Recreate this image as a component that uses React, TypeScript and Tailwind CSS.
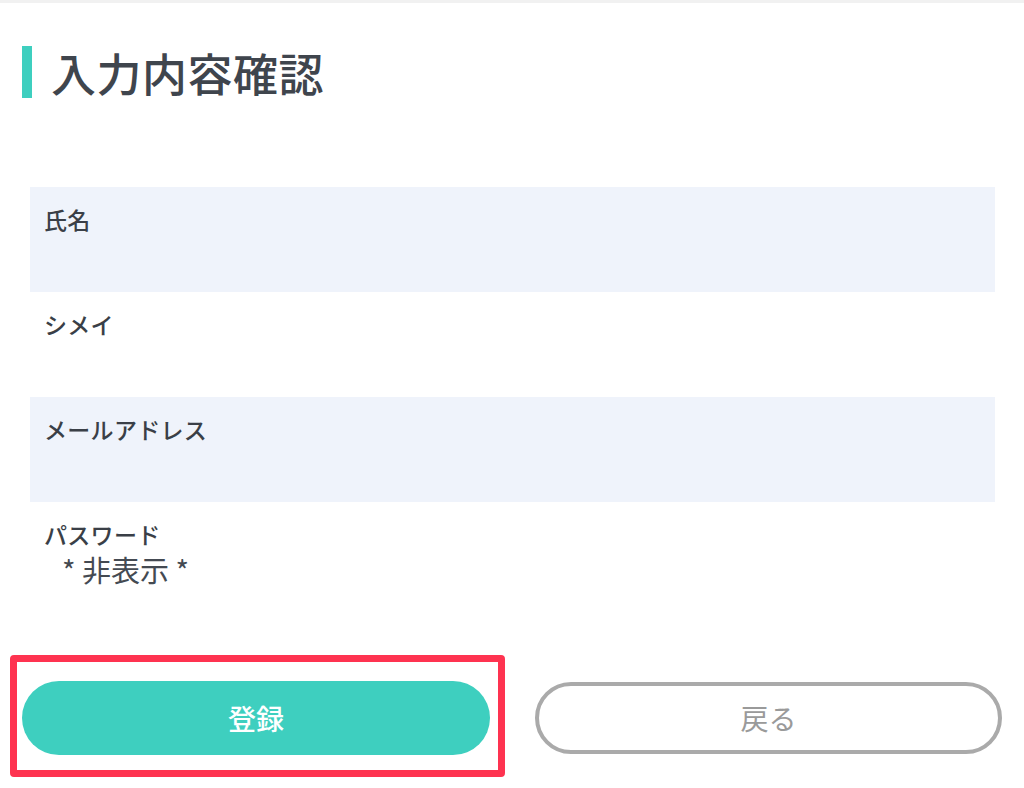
import React from "react"

const font = { fontFamily: '"Noto Sans CJK JP", "Noto Sans", sans-serif' }

type Row = { label: string; value: string; shaded: boolean }

const rows: Row[] = [
  { label: "氏名", value: "", shaded: true },
  { label: "シメイ", value: "", shaded: false },
  { label: "メールアドレス", value: "", shaded: true },
  { label: "パスワード", value: "* 非表示 *", shaded: false },
]

export default function App() {
  return (
    <div className="w-[1024px] h-[788px] bg-white overflow-hidden" style={font}>
      <div className="h-[3px] bg-[#f1f1f1]" />

      {/* heading */}
      <div className="flex items-center mt-[43px] ml-[22px]">
        <div className="w-[10px] h-[52px] bg-[#3ecfbf]" />
        <h1 className="ml-[19px] text-[45px] leading-none font-medium text-[#3f454d] tracking-[0.5px]">
          入力内容確認
        </h1>
      </div>

      {/* confirm list */}
      <div className="mt-[89px] mx-[30px] w-[965px]">
        {rows.map((r) => (
          <div
            key={r.label}
            className={`h-[105px] pl-[14px] pt-[15px] ${r.shaded ? "bg-[#eff3fb]" : "bg-white"}`}
          >
            <div className="text-[23px] leading-[34px] font-medium text-[#3a3f47] tracking-[0.3px]">{r.label}</div>
            <div className="pl-[18px] text-[29px] leading-[36px] text-[#444a52] h-[36px]">{r.value}</div>
          </div>
        ))}
      </div>

      {/* buttons */}
      <div className="flex mt-[74px] mx-[22px] gap-[45px]">
        <div className="relative w-[468px]">
          <button className="w-full h-[74px] rounded-full bg-[#3ecfbf] text-white text-[28px] leading-none font-medium">
            登録
          </button>
          <div className="absolute left-[-12px] top-[-26px] right-[-15px] bottom-[-22px] border-[7px] border-[#fe3350] rounded-[4px] pointer-events-none" />
        </div>
        <button className="w-[467px] h-[72px] mt-[1px] rounded-full border-[4px] border-[#aaaaaa] bg-white text-[#9a9a9a] text-[28px] leading-none">
          戻る
        </button>
      </div>
    </div>
  )
}
